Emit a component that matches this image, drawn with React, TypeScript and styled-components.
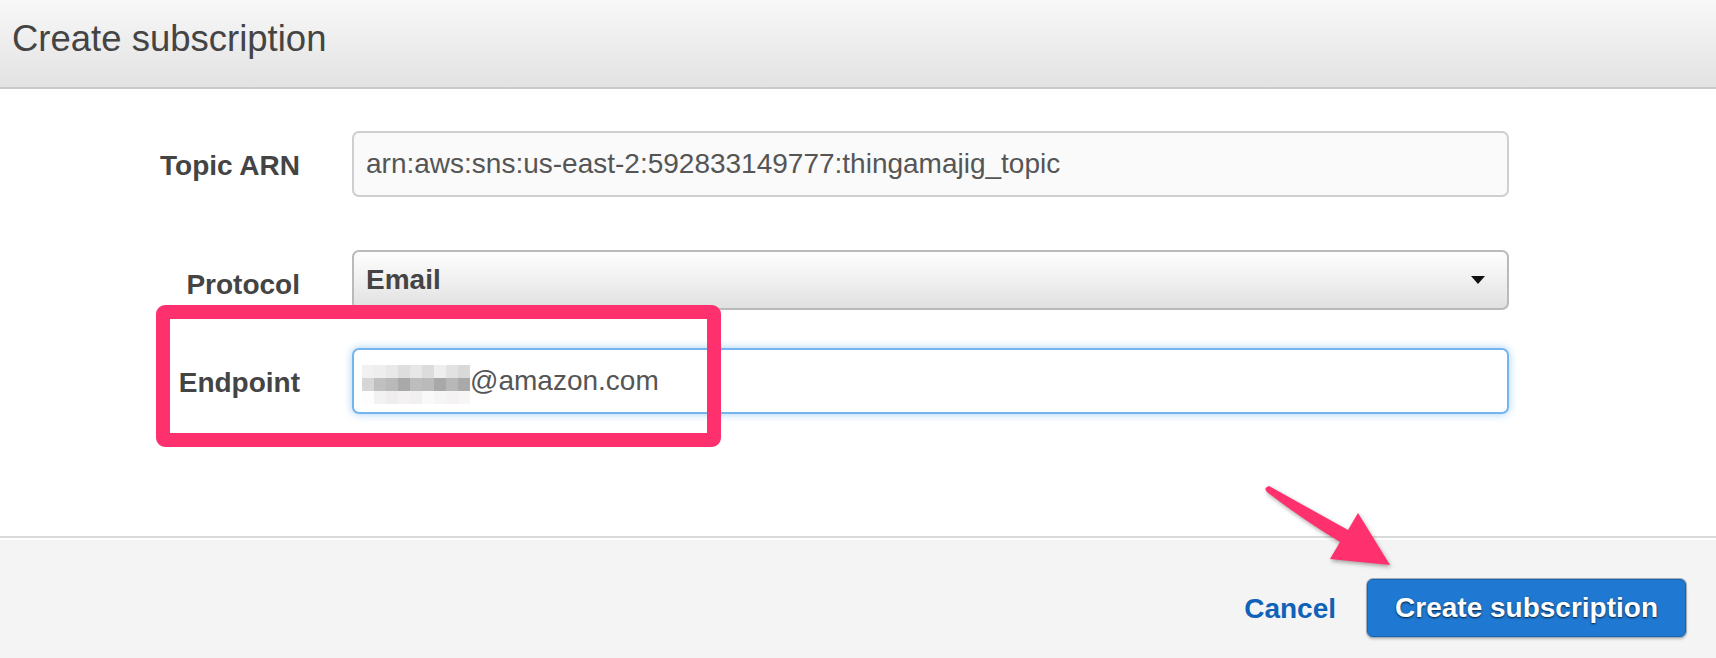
import styled, { createGlobalStyle } from 'styled-components';

const GlobalStyle = createGlobalStyle`
  html, body {
    margin: 0;
    padding: 0;
    background: #fff;
    font-family: "Liberation Sans", Arial, Helvetica, sans-serif;
  }
`;

const redacted = [
  ['#f1f1f1', '#eeeeee', '#e9e9e9', '#dedede', '#e7e7e7', '#dcdcdc', '#eeeeee', '#e2e2e2', '#d9d9d9'],
  ['#d6d6d6', '#c0c0c0', '#b9b9b9', '#a9a9a9', '#bdbdbd', '#bababa', '#a8a8a8', '#b7b7b7', '#a9a9a9'],
  ['#fdfdfd', '#f2f2f2', '#efeded', '#f3f1f1', '#f1efef', '#f9f9f9', '#f6f5f5', '#f4f2f2', '#f8f6f4'],
];

function App() {
  return (
    <Page>
      <GlobalStyle />
      <Header>
        <Title>Create subscription</Title>
      </Header>

      <Form>
        <Field $gap={0}>
          <Label>Topic ARN</Label>
          <TextInput readOnly value="arn:aws:sns:us-east-2:592833149777:thingamajig_topic" />
        </Field>
        <Field $gap={53}>
          <Label $shift={9}>Protocol</Label>
          <SelectBox>
            <span>Email</span>
            <Caret />
          </SelectBox>
        </Field>
        <Field $gap={38}>
          <Label>Endpoint</Label>
          <FocusedInput>
            <Redacted>
              {redacted.flat().map((tone, i) => (
                <Pixel key={i} $tone={tone} />
              ))}
            </Redacted>
            <span>@amazon.com</span>
          </FocusedInput>
        </Field>
      </Form>

      <Footer>
        <Actions>
          <CancelLink href="#">Cancel</CancelLink>
          <PrimaryButton>Create subscription</PrimaryButton>
        </Actions>
      </Footer>

      {/* annotations drawn over the screenshot */}
      <Highlight />
      <Arrow viewBox="0 0 160 100">
        <path d="M19,11 L98,55 L108,38 L140,90 L80,84 L90,67 Q52,44 17,17 Q13,13 19,11 Z" />
      </Arrow>
    </Page>
  );
}

export default App;

const Page = styled.div`
  position: relative;
  width: 100%;
  min-height: 100vh;
  display: flex;
  flex-direction: column;
`;

const Header = styled.div`
  height: 87px;
  background: linear-gradient(#f8f8f8, #e2e2e2);
  border-bottom: 2px solid #c9c9c9;
`;

const Title = styled.h1`
  margin: 0;
  padding: 18px 0 0 12px;
  font-size: 36.5px;
  line-height: 1.15;
  font-weight: 400;
  color: #444;
`;

const Form = styled.div`
  display: flex;
  flex-direction: column;
  padding: 42px 0 122px;
`;

const Field = styled.div<{ $gap: number }>`
  display: grid;
  grid-template-columns: 300px 1157px;
  column-gap: 52px;
  align-items: center;
  margin-top: ${(p) => p.$gap}px;
`;

const Label = styled.label<{ $shift?: number }>`
  text-align: right;
  font-size: 28px;
  font-weight: 700;
  color: #444;
  padding-top: ${(p) => p.$shift ?? 4}px;
`;

const inputBase = `
  box-sizing: border-box;
  width: 100%;
  height: 66px;
  border-radius: 7px;
  padding: 0 12px;
  font-family: "Liberation Sans", Arial, Helvetica, sans-serif;
  font-size: 28px;
  color: #555;
`;

const TextInput = styled.input`
  ${inputBase}
  background: #fafafa;
  border: 2px solid #cfcfcf;
  outline: none;
`;

const FocusedInput = styled.div`
  ${inputBase}
  display: flex;
  align-items: center;
  background: #fff;
  border: 2px solid #74b5ef;
  box-shadow: 0 0 9px rgba(102, 175, 233, 0.6);
`;

const Redacted = styled.div`
  display: grid;
  grid-template-columns: repeat(9, 12px);
  grid-auto-rows: 13px;
  margin: 6px 0 0 -4px;
`;

const Pixel = styled.span<{ $tone: string }>`
  background: ${(p) => p.$tone};
`;

const SelectBox = styled.div`
  box-sizing: border-box;
  height: 60px;
  display: flex;
  align-items: center;
  justify-content: space-between;
  padding: 0 22px 0 12px;
  border: 2px solid #bababa;
  border-radius: 7px;
  background: linear-gradient(#fefefe, #e1e1e1);
  font-size: 28px;
  font-weight: 700;
  color: #444;
`;

const Caret = styled.span`
  width: 0;
  height: 0;
  border-left: 7px solid transparent;
  border-right: 7px solid transparent;
  border-top: 8px solid #111;
`;

const Footer = styled.div`
  flex: 1;
  display: flex;
  justify-content: flex-end;
  align-items: flex-start;
  padding: 41px 30px 0 0;
  background: #f4f4f4;
  border-top: 2px solid #dadada;
  box-shadow: inset 0 2px 0 #fff;
`;

const Actions = styled.div`
  display: flex;
  align-items: center;
  gap: 31px;
`;

const CancelLink = styled.a`
  font-size: 28px;
  font-weight: 700;
  color: #1062b9;
  text-decoration: none;
  padding-top: 2px;
`;

const PrimaryButton = styled.button`
  box-sizing: border-box;
  height: 58px;
  padding: 0 27px;
  border: 1px solid #1764b3;
  border-radius: 6px;
  background: #1f78d1;
  box-shadow: 0 0 0 1px #a3abb4, 0 2px 3px rgba(0, 0, 0, 0.25);
  font-family: "Liberation Sans", Arial, Helvetica, sans-serif;
  font-size: 28px;
  font-weight: 700;
  color: #fff;
  text-shadow: 0 1px 2px rgba(0, 0, 0, 0.75);
`;

const Highlight = styled.div`
  position: absolute;
  left: 156px;
  top: 305px;
  width: 565px;
  height: 142px;
  box-sizing: border-box;
  border: 14px solid #ff306e;
  border-radius: 9px;
  pointer-events: none;
`;

const Arrow = styled.svg`
  position: absolute;
  left: 1250px;
  top: 475px;
  width: 160px;
  height: 100px;
  overflow: visible;
  filter: drop-shadow(1px 2px 2px rgba(0, 0, 0, 0.35));

  path {
    fill: #ff306e;
  }
`;
